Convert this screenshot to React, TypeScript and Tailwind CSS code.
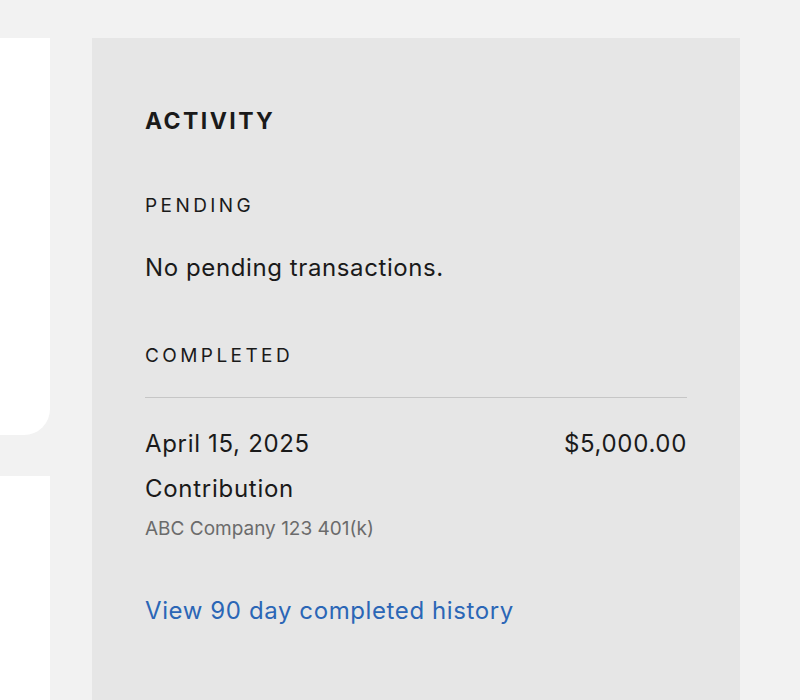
export default function App() {
  const font = { fontFamily: 'Inter, "Liberation Sans", sans-serif' }
  return (
    <div className="flex h-[700px] w-[800px] overflow-hidden bg-[#f2f2f2] pt-[38px]" style={font}>
      {/* left cards */}
      <div className="flex w-[50px] flex-col gap-[41px]">
        <div className="h-[397px] rounded-br-[26px] bg-white" />
        <div className="flex-1 bg-white" />
      </div>

      {/* activity panel */}
      <div className="ml-[42px] w-[648px] bg-[#e6e6e6] px-[53px] pt-[72px]">
        <h2 className="text-[23px] font-bold leading-none tracking-[0.105em] text-[#1a1a1a]">ACTIVITY</h2>

        <p className="mt-[63px] text-[19px] leading-none tracking-[0.18em] text-[#1a1a1a]">PENDING</p>
        <p className="mt-[41px] text-[24px] leading-none tracking-[0.025em] text-[#1a1a1a]">No pending transactions.</p>

        <p className="mt-[66px] text-[19px] leading-none tracking-[0.18em] text-[#1a1a1a]">COMPLETED</p>
        <div className="mt-[32px] h-px bg-[#c6c6c6]" />

        <div className="mt-[34px] flex items-start justify-between text-[24px] leading-none tracking-[0.028em] text-[#1a1a1a]">
          <span>April 15, 2025</span>
          <span>$5,000.00</span>
        </div>
        <p className="mt-[21px] text-[24px] leading-none tracking-[0.03em] text-[#1a1a1a]">Contribution</p>
        <p className="mt-[18px] text-[19px] leading-none text-[#6b6b6b]">ABC Company 123 401(k)</p>

        <a href="#" className="mt-[61px] block text-[24px] leading-none tracking-[0.025em] text-[#2b66b6]">
          View 90 day completed history
        </a>
      </div>
    </div>
  )
}
